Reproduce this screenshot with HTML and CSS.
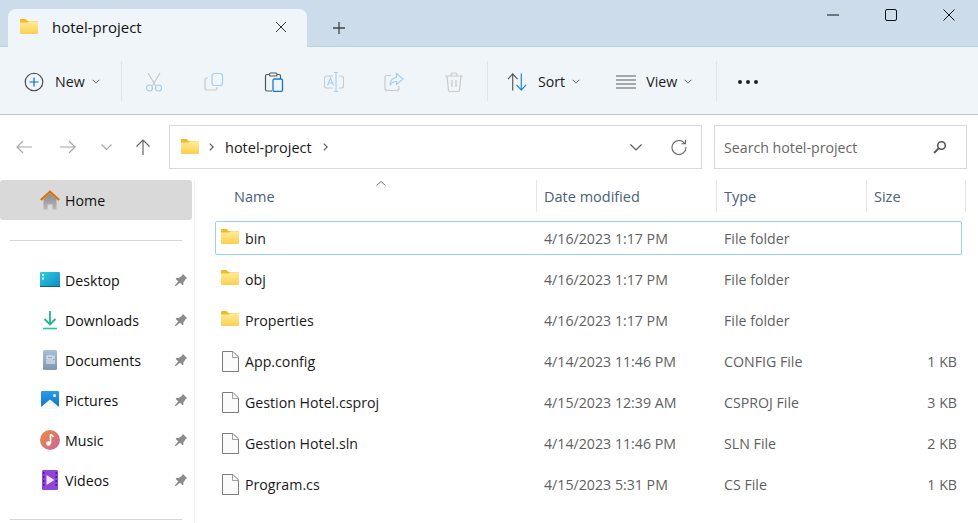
FILE: index.html
```html
<!DOCTYPE html>
<html lang="en">
  <head>
    <meta charset="UTF-8" />
    <title>hotel-project - File Explorer</title>
    <link rel="stylesheet" href="styles.css">
  </head>
  <body>
    <!-- shared icons -->
    <svg class="defs" aria-hidden="true">
      <defs>
        <linearGradient id="folder-fill" x1="0" y1="0" x2="0" y2="1">
          <stop offset="0" stop-color="#ffec9c" />
          <stop offset="1" stop-color="#fbcf4e" />
        </linearGradient>
        <linearGradient id="home-fill" x1="0" y1="0" x2="0" y2="1">
          <stop offset="0" stop-color="#8a8a8a" />
          <stop offset="1" stop-color="#b8b8b8" />
        </linearGradient>
        <linearGradient id="desktop-fill" x1="0" y1="0" x2="1" y2="1">
          <stop offset="0" stop-color="#2bd0e0" />
          <stop offset="1" stop-color="#1487c4" />
        </linearGradient>
        <linearGradient id="docs-fill" x1="0" y1="0" x2="0" y2="1">
          <stop offset="0" stop-color="#a9bfd6" />
          <stop offset="1" stop-color="#7f96b4" />
        </linearGradient>
        <linearGradient id="pics-fill" x1="0" y1="0" x2="0" y2="1">
          <stop offset="0" stop-color="#2a9cea" />
          <stop offset="1" stop-color="#0f6fc6" />
        </linearGradient>
        <linearGradient id="music-fill" x1="0" y1="0" x2="1" y2="1">
          <stop offset="0" stop-color="#ee8a3c" />
          <stop offset="1" stop-color="#c9659e" />
        </linearGradient>
      </defs>
      <symbol id="folder" viewBox="0 0 18 15">
        <path d="M0 1q0-1 1-1h4.500l2 2H17q1 0 1 1v2H0z" fill="#f6b91f" />
        <path d="M0 3.500h7.500l1.500-1.200h8q1 0 1 1V14q0 1-1 1H1q-1 0-1-1z" fill="url(#folder-fill)" />
      </symbol>
      <symbol id="file" viewBox="0 0 17 21">
        <path d="M1 .5h10l5.500 5.500v14.500H.5V.5z" fill="#fbfbfb" stroke="#7d7d7d" />
        <path d="M10.500.5v6h6" fill="none" stroke="#a0a0a0" />
      </symbol>
      <symbol id="pin" viewBox="0 0 14 14">
        <path d="M8.800.8l4.400 4.400-1.300.6-2.500 3.400.1 2.300-.9.800-2.500-2.500L1.400 13.200.8 12.600l3.400-4.200L1.700 5.900l.8-.9 2.300.1 3.400-2.500z" fill="#8c8c8c" />
      </symbol>
      <symbol id="chev" viewBox="0 0 8 5">
        <path d="M.5.700L4 4.200 7.500.700" fill="none" stroke="currentColor" />
      </symbol>
    </svg>

    <div class="titlebar">
      <div class="tab">
        <svg class="tab-folder"><use href="#folder" /></svg>
        <span class="tab-title">hotel-project</span>
        <svg class="tab-close" viewBox="0 0 12 12"><path d="M1 1l10 10M11 1L1 11" stroke="#333" fill="none" /></svg>
      </div>
      <svg class="tab-add" viewBox="0 0 12 12"><path d="M6 0v12M0 6h12" stroke="#444" stroke-width="1.300" fill="none" /></svg>
      <div class="window-btns">
        <svg viewBox="0 0 12 12"><path d="M0 6h12" stroke="#111" fill="none" /></svg>
        <svg viewBox="0 0 12 12"><rect x=".5" y=".5" width="11" height="11" rx="1.500" stroke="#111" fill="none" /></svg>
        <svg viewBox="0 0 12 12"><path d="M.5.500l11 11M11.500.500l-11 11" stroke="#111" fill="none" /></svg>
      </div>
    </div>

    <div class="toolbar">
      <div class="tool tool-new">
        <svg class="tool-icon" viewBox="0 0 20 20">
          <circle cx="10" cy="10" r="8.800" fill="none" stroke="#444" stroke-width="1.100" />
          <path d="M10 5.500v9M5.500 10h9" stroke="#0a6cc4" stroke-width="1.200" fill="none" />
        </svg>
        <span>New</span>
        <svg class="chev"><use href="#chev" /></svg>
      </div>
      <div class="tool-sep"></div>
      <div class="tool-btn">
        <svg class="tool-icon" viewBox="0 0 20 20">
          <path d="M4 1l7.500 12.500M16 1L8.500 13.500" stroke="#c4c4c4" stroke-width="1.100" fill="none" />
          <circle cx="5.500" cy="16" r="3" fill="none" stroke="#a3cdf0" stroke-width="1.200" />
          <circle cx="14.500" cy="16" r="3" fill="none" stroke="#a3cdf0" stroke-width="1.200" />
        </svg>
      </div>
      <div class="tool-btn">
        <svg class="tool-icon" viewBox="0 0 20 20">
          <path d="M4 6H3Q1 6 1 8v8q0 2 2 2h8q2 0 2-2v-1" fill="none" stroke="#c9c9c9" stroke-width="1.200" />
          <rect x="8" y="1.500" width="10.500" height="12" rx="2.500" fill="#f0f5f9" stroke="#a3cdf0" stroke-width="1.200" />
        </svg>
      </div>
      <div class="tool-btn">
        <svg class="tool-icon" viewBox="0 0 20 20">
          <path d="M5.500 2.500H3Q1.500 2.500 1.500 4v13.500Q1.500 19 3 19h5" fill="none" stroke="#555" stroke-width="1.200" />
          <path d="M13 2.500h2Q16.500 2.500 16.500 4v3" fill="none" stroke="#555" stroke-width="1.200" />
          <rect x="5.500" y="1" width="7.500" height="3" rx="1" fill="#f0f5f9" stroke="#555" stroke-width="1.100" />
          <rect x="9" y="7" width="9.500" height="12.500" rx="1.500" fill="#f0f5f9" stroke="#1479d4" stroke-width="1.300" />
        </svg>
      </div>
      <div class="tool-btn">
        <svg class="tool-icon" viewBox="0 0 20 20">
          <path d="M9 4H2.500Q.500 4 .500 6v8q0 2 2 2H9M15 4h2.500q2 0 2 2v8q0 2-2 2H15" fill="none" stroke="#c9c9c9" stroke-width="1.100" />
          <path d="M3.500 13.500L6.500 6l3 7.500M4.700 11h3.600" fill="none" stroke="#a3cdf0" stroke-width="1.100" />
          <path d="M12 .5v19M10 .5h4M10 19.500h4" fill="none" stroke="#a3cdf0" stroke-width="1.100" />
        </svg>
      </div>
      <div class="tool-btn">
        <svg class="tool-icon" viewBox="0 0 20 20">
          <path d="M7 3.500H3Q1 3.500 1 5.500v11q0 2 2 2h10q2 0 2-2V14" fill="none" stroke="#c9c9c9" stroke-width="1.200" />
          <path d="M12.500 1.500l6.500 5.500-6.500 5.500V9.500c-3 0-5 1-6.500 4 0-5 2.500-7.500 6.500-8z" fill="none" stroke="#a3cdf0" stroke-width="1.200" />
        </svg>
      </div>
      <div class="tool-btn">
        <svg class="tool-icon" viewBox="0 0 20 20">
          <path d="M1 4h18M7 4V2.500Q7 1 8.500 1h3Q13 1 13 2.500V4M3 4l1.500 14q.2 1.500 1.700 1.500h7.600q1.500 0 1.700-1.500L17 4M8 8v7M12 8v7" fill="none" stroke="#c9c9c9" stroke-width="1.200" />
        </svg>
      </div>
      <div class="tool-sep"></div>
      <div class="tool tool-sort">
        <svg class="tool-icon" viewBox="0 0 21 20">
          <path d="M6 19V2M1 7l5-5.500L11 7" fill="none" stroke="#555" stroke-width="1.200" />
          <path d="M15 1v17.500M10 13l5 5.500 5-5.500" fill="none" stroke="#1283da" stroke-width="1.200" />
        </svg>
        <span>Sort</span>
        <svg class="chev"><use href="#chev" /></svg>
      </div>
      <div class="tool tool-view">
        <svg class="tool-icon" viewBox="0 0 20 14">
          <path d="M0 1h20M0 5h20M0 9h20M0 13h20" stroke="#5a5a5a" stroke-width="1.100" fill="none" />
        </svg>
        <span>View</span>
        <svg class="chev"><use href="#chev" /></svg>
      </div>
      <div class="tool-sep"></div>
      <div class="tool-more"><i></i><i></i><i></i></div>
    </div>

    <div class="navrow">
      <div class="nav-arrows">
        <svg viewBox="0 0 16 14"><path d="M16 7H1M7 1L1 7l6 6" stroke="#a6a6a6" stroke-width="1.100" fill="none" /></svg>
        <svg viewBox="0 0 16 14"><path d="M0 7h15M9 1l6 6-6 6" stroke="#a6a6a6" stroke-width="1.100" fill="none" /></svg>
        <svg class="nav-down" viewBox="0 0 11 6"><path d="M.5.500l5 5 5-5" stroke="#a6a6a6" stroke-width="1.100" fill="none" /></svg>
        <svg viewBox="0 0 16 16"><path d="M8 16V1M1.500 7.500L8 1l6.500 6.500" stroke="#666" stroke-width="1.200" fill="none" /></svg>
      </div>
      <div class="addressbar">
        <svg class="addr-folder"><use href="#folder" /></svg>
        <svg class="crumb" viewBox="0 0 5 8"><path d="M.8.600L4.200 4 .8 7.400" stroke="#555" stroke-width="1.100" fill="none" /></svg>
        <span class="addr-text">hotel-project</span>
        <svg class="crumb" viewBox="0 0 5 8"><path d="M.8.600L4.200 4 .8 7.400" stroke="#555" stroke-width="1.100" fill="none" /></svg>
        <svg class="addr-drop" viewBox="0 0 12 7"><path d="M.5.500L6 6 11.500.500" stroke="#555" stroke-width="1.100" fill="none" /></svg>
        <svg class="addr-refresh" viewBox="0 0 16 16"><path d="M13.800 4.500A7 7 0 1 0 15 8M14.500 .8v4h-4" stroke="#666" stroke-width="1.100" fill="none" /></svg>
      </div>
      <div class="searchbox">
        <span>Search hotel-project</span>
        <svg viewBox="0 0 14 14"><circle cx="8.500" cy="5.500" r="3.800" stroke="#555" stroke-width="1.600" fill="none" /><path d="M5.500 8.500L1 13" stroke="#555" stroke-width="1.800" fill="none" /></svg>
      </div>
    </div>

    <div class="body">
      <aside class="sidebar">
        <div class="side-item side-home">
          <svg class="side-icon" viewBox="0 0 20 20">
            <path d="M3.500 9L10 3l6.500 6v10.500h-4v-5h-5v5h-4z" fill="url(#home-fill)" />
            <path d="M.8 10L10 1.500 19.200 10" fill="none" stroke="#e06c00" stroke-width="2" />
          </svg>
          <span>Home</span>
        </div>
        <hr class="side-rule" />
        <div class="side-item">
          <svg class="side-icon" viewBox="0 0 20 20">
            <path d="M1 2h18q1 0 1 1v13q0 1-1 1H1q-1 0-1-1V3q0-1 1-1z" fill="url(#desktop-fill)" />
            <path d="M0 16h20v1H0z" fill="#0d5a94" />
            <path d="M2 4h2v2H2zM2 7.500h2v2H2z" fill="#e8fbff" />
          </svg>
          <span>Desktop</span>
          <svg class="pin"><use href="#pin" /></svg>
        </div>
        <div class="side-item">
          <svg class="side-icon" viewBox="0 0 20 20">
            <path d="M10 1v13M4.500 9l5.500 5.500L15.500 9" fill="none" stroke="#20b590" stroke-width="1.800" />
            <path d="M3 18.500h14" stroke="#2ac0a0" stroke-width="1.600" fill="none" />
          </svg>
          <span>Downloads</span>
          <svg class="pin"><use href="#pin" /></svg>
        </div>
        <div class="side-item">
          <svg class="side-icon" viewBox="0 0 20 20">
            <rect x="3" y="0" width="14" height="20" rx="1.500" fill="url(#docs-fill)" />
            <path d="M7 6h6v3H7zM14 6h1M14 8h1M6 11h9M6 13h9" stroke="#f2f5f9" stroke-width="1" fill="none" />
          </svg>
          <span>Documents</span>
          <svg class="pin"><use href="#pin" /></svg>
        </div>
        <div class="side-item">
          <svg class="side-icon" viewBox="0 0 20 20">
            <rect x="1" y="1" width="18" height="18" rx="1" fill="url(#pics-fill)" />
            <path d="M1 17l9-7.500 9 7.500v2H1z" fill="#f2f8fd" />
            <circle cx="14.500" cy="5.500" r="1.500" fill="#f2f8fd" />
          </svg>
          <span>Pictures</span>
          <svg class="pin"><use href="#pin" /></svg>
        </div>
        <div class="side-item">
          <svg class="side-icon" viewBox="0 0 20 20">
            <circle cx="10" cy="10" r="10" fill="url(#music-fill)" />
            <path d="M10.500 4v9" stroke="#fff" stroke-width="1.600" fill="none" />
            <path d="M10.500 4.500q2 .3 3 2.500" stroke="#fff" stroke-width="1.500" fill="none" />
            <circle cx="8.500" cy="13.500" r="2.300" fill="#fff" />
          </svg>
          <span>Music</span>
          <svg class="pin"><use href="#pin" /></svg>
        </div>
        <div class="side-item">
          <svg class="side-icon" viewBox="0 0 20 20">
            <rect x="2" y="0" width="16" height="20" rx="1.500" fill="#8f45d8" />
            <path d="M3 2h1.500v2H3zM3 6h1.500v2H3zM3 10h1.500v2H3zM3 14h1.500v2H3zM15.500 2H17v2h-1.500zM15.500 6H17v2h-1.500zM15.500 10H17v2h-1.500zM15.500 14H17v2h-1.500z" fill="#4a2184" />
            <path d="M6.500 5l8 5-8 5z" fill="#efe4fb" />
          </svg>
          <span>Videos</span>
          <svg class="pin"><use href="#pin" /></svg>
        </div>
        <hr class="side-rule side-rule-end" />
      </aside>

      <section class="files">
        <div class="file-head">
          <div class="head-cell head-name">Name<svg class="sort-caret" viewBox="0 0 10 5"><path d="M.5 4.500L5 .500l4.500 4" stroke="#777" fill="none" /></svg></div>
          <div class="head-cell">Date modified</div>
          <div class="head-cell">Type</div>
          <div class="head-cell head-size">Size</div>
        </div>
        <div class="file-list">
          <div class="file-row file-row-focus">
            <svg class="row-folder"><use href="#folder" /></svg>
            <span class="row-name">bin</span><span class="row-meta">4/16/2023 1:17 PM</span><span class="row-meta">File folder</span><span class="row-size"></span>
          </div>
          <div class="file-row">
            <svg class="row-folder"><use href="#folder" /></svg>
            <span class="row-name">obj</span><span class="row-meta">4/16/2023 1:17 PM</span><span class="row-meta">File folder</span><span class="row-size"></span>
          </div>
          <div class="file-row">
            <svg class="row-folder"><use href="#folder" /></svg>
            <span class="row-name">Properties</span><span class="row-meta">4/16/2023 1:17 PM</span><span class="row-meta">File folder</span><span class="row-size"></span>
          </div>
          <div class="file-row">
            <svg class="row-file"><use href="#file" /></svg>
            <span class="row-name">App.config</span><span class="row-meta">4/14/2023 11:46 PM</span><span class="row-meta">CONFIG File</span><span class="row-size">1 KB</span>
          </div>
          <div class="file-row">
            <svg class="row-file"><use href="#file" /></svg>
            <span class="row-name">Gestion Hotel.csproj</span><span class="row-meta">4/15/2023 12:39 AM</span><span class="row-meta">CSPROJ File</span><span class="row-size">3 KB</span>
          </div>
          <div class="file-row">
            <svg class="row-file"><use href="#file" /></svg>
            <span class="row-name">Gestion Hotel.sln</span><span class="row-meta">4/14/2023 11:46 PM</span><span class="row-meta">SLN File</span><span class="row-size">2 KB</span>
          </div>
          <div class="file-row">
            <svg class="row-file"><use href="#file" /></svg>
            <span class="row-name">Program.cs</span><span class="row-meta">4/15/2023 5:31 PM</span><span class="row-meta">CS File</span><span class="row-size">1 KB</span>
          </div>
        </div>
      </section>
    </div>
  </body>
</html>
```

FILE: styles.css
```css
html,
body {
  height: 100%;
  overflow: hidden;
}

body {
  margin: 0;
  background-color: #ffffff;
  color: #1a1a1a;
  font-family: "Open Sans", "Noto Sans", sans-serif;
  font-size: 14.2px;
}

svg {
  display: block;
  flex: none;
}

.defs {
  width: 0;
  height: 0;
}

/* title bar */
.titlebar {
  display: flex;
  align-items: flex-end;
  height: 46px;
  background-color: #cddcea;
  border-bottom: 1px solid #bccfe0;
}

.tab {
  display: flex;
  align-items: center;
  width: 299px;
  height: 38px;
  margin-left: 8px;
  margin-bottom: -1px;
  box-sizing: border-box;
  padding: 0 20px 2px 12px;
  background-color: #f0f5f9;
  border-radius: 8px 8px 0 0;
}

.tab-folder {
  width: 18px;
  height: 15px;
  margin-top: -2px;
}

.tab-title {
  flex: 1;
  margin-left: 14px;
  font-size: 15px;
  color: #111;
}

.tab-close {
  width: 12px;
  height: 12px;
}

.tab-add {
  width: 12px;
  height: 12px;
  margin-left: 26px;
  margin-bottom: 12px;
}

.window-btns {
  display: flex;
  gap: 46px;
  align-self: flex-start;
  margin-left: auto;
  margin-right: 23px;
  margin-top: 9px;
}

.window-btns svg {
  width: 12px;
  height: 12px;
}

/* command bar */
.toolbar {
  display: flex;
  align-items: center;
  height: 65px;
  padding-top: 2px;
  background-color: #f0f5f9;
  border-bottom: 1px solid #b9c9d3;
}

.tool {
  display: flex;
  align-items: center;
}

.tool-icon {
  width: 20px;
  height: 20px;
}

.tool span {
  margin-left: 11px;
  font-size: 14.2px;
}

.tool .chev {
  width: 8px;
  height: 5px;
  margin-left: 7px;
  color: #666;
}

.tool-new {
  width: 97px;
  margin-left: 24px;
}

.tool-sep {
  width: 1px;
  height: 40px;
  margin-top: -2px;
  background-color: #e0e5e9;
}

.tool-btn + .tool-sep {
  margin-left: 3px;
}

.tool-btn {
  display: flex;
  justify-content: center;
  width: 60px;
}

.tool-sep + .tool-btn {
  margin-left: 2px;
}

.tool-sort {
  margin-left: 19px;
}

.tool-view {
  margin-left: 36px;
}

.tool-view span {
  margin-left: 10px;
}

.tool-view .tool-icon {
  height: 14px;
}

.tool-view + .tool-sep {
  margin-left: 24px;
}

.tool-more {
  display: flex;
  gap: 4px;
  margin-left: 21px;
}

.tool-more i {
  width: 4px;
  height: 4px;
  border-radius: 50%;
  background-color: #222;
}

/* address row */
.navrow {
  display: flex;
  align-items: center;
  height: 44px;
  margin-top: 10px;
}

.nav-arrows {
  display: flex;
  align-items: center;
  width: 169px;
  padding-left: 16px;
  box-sizing: border-box;
}

.nav-arrows svg {
  width: 16px;
  height: 14px;
  margin-right: 28px;
}

.nav-arrows .nav-down {
  width: 11px;
  height: 6px;
  margin-left: -3px;
  margin-right: 23px;
}

.nav-arrows svg:last-child {
  height: 16px;
  margin-right: 0;
}

.addressbar {
  display: flex;
  align-items: center;
  width: 533px;
  height: 44px;
  box-sizing: border-box;
  padding: 0 14px 0 11px;
  border: 1px solid #d9d9d9;
}

.addr-folder {
  width: 18px;
  height: 15px;
  margin-top: -1px;
}

.crumb {
  width: 5px;
  height: 8px;
  margin-left: 10px;
}

.addr-text {
  margin-left: 11px;
  margin-right: 1px;
  font-size: 14.5px;
}

.addr-text + .crumb {
  margin-left: 10px;
}

.addr-drop {
  width: 12px;
  height: 7px;
  margin-left: auto;
}

.addr-refresh {
  width: 16px;
  height: 16px;
  margin-left: 29px;
}

.searchbox {
  display: flex;
  align-items: center;
  justify-content: space-between;
  width: 253px;
  height: 44px;
  margin-left: 12px;
  box-sizing: border-box;
  padding: 0 19px 0 9px;
  border: 1px solid #d9d9d9;
  color: #666;
}

.searchbox svg {
  width: 14px;
  height: 14px;
}

/* lower part */
.body {
  display: flex;
  margin-top: 11px;
}

.sidebar {
  flex: none;
  width: 195px;
  height: 343px;
  box-sizing: border-box;
  padding-right: 2px;
  border-right: 1px solid #f0f0f0;
}

.side-item {
  display: flex;
  align-items: center;
  height: 40px;
  padding-left: 40px;
  padding-right: 4px;
}

.side-home {
  background-color: #d9d9d9;
  border-radius: 3px;
}

.side-icon {
  width: 20px;
  height: 20px;
}

.side-item span {
  flex: 1;
  margin-left: 5px;
  color: #111;
}

.pin {
  width: 14px;
  height: 14px;
}

.side-rule {
  width: 172px;
  height: 1px;
  margin: 20px 0 19px 10px;
  border: 0;
  background-color: #d4d4d4;
}

.side-rule-end {
  margin-top: 19px;
}

.files {
  flex: 1;
  padding-left: 20px;
}

.file-head {
  display: grid;
  grid-template-columns: 321px 180px 150px 100px;
  height: 32px;
}

.head-cell {
  display: flex;
  align-items: center;
  padding-left: 7px;
  border-left: 1px solid #e5e5e5;
  color: #4c607a;
  font-size: 14.5px;
}

.head-name {
  position: relative;
  padding-left: 19px;
  border-left: 0;
}

.head-size {
  border-right: 1px solid #e5e5e5;
}

.sort-caret {
  position: absolute;
  left: 161px;
  top: 1px;
  width: 10px;
  height: 5px;
}

.file-list {
  display: flex;
  flex-direction: column;
  gap: 7px;
  width: 747px;
  margin-top: 9px;
}

.file-row {
  display: grid;
  grid-template-columns: 29px 299px 180px 1fr 60px;
  align-items: center;
  height: 34px;
  box-sizing: border-box;
  border: 1px solid transparent;
  border-radius: 2px;
}

.file-row-focus {
  border-color: #99d1f5;
}

.row-folder {
  width: 18px;
  height: 15px;
  margin-left: 5px;
  margin-top: -4px;
}

.row-file {
  width: 17px;
  height: 21px;
  margin-left: 6px;
}

.row-name {
  color: #1a1a1a;
}

.row-meta {
  color: #5f5f5f;
}

.row-size {
  text-align: right;
  padding-right: 4px;
  color: #5f5f5f;
}
```
